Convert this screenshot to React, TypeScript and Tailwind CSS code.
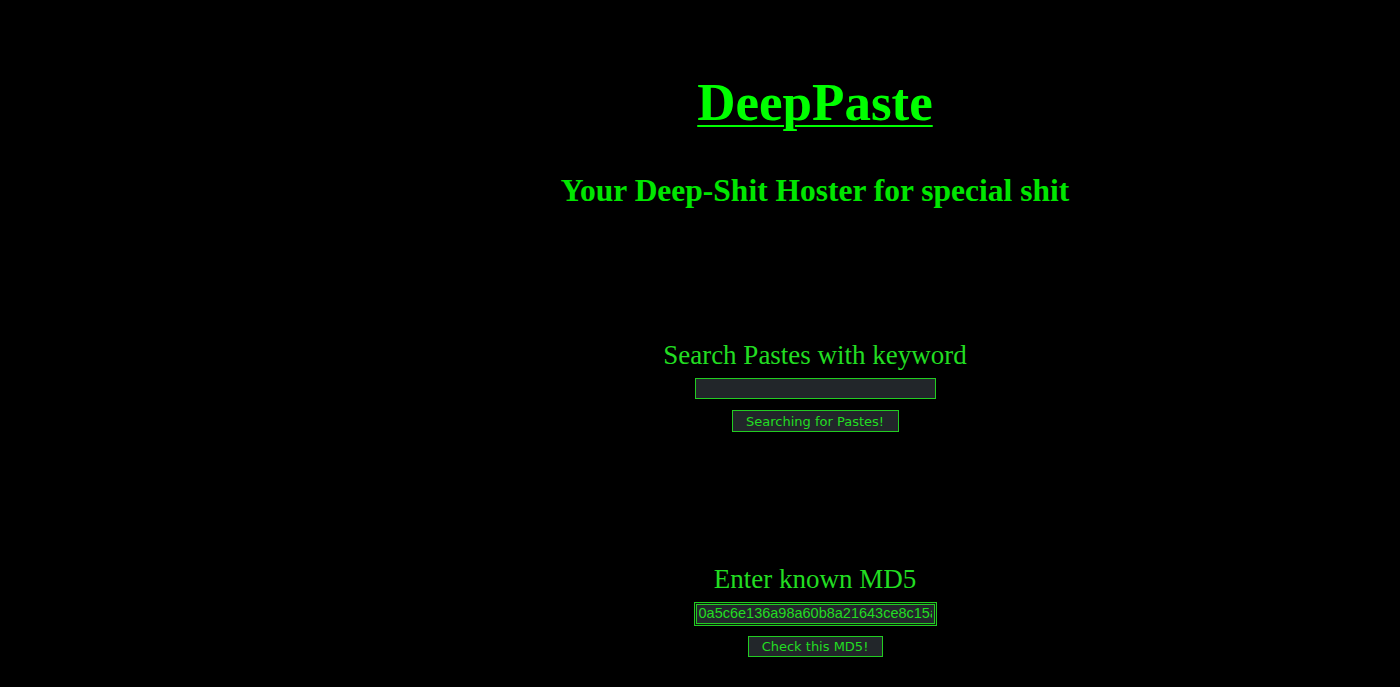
import React from 'react'

export default function App() {
  return (
    <div className="min-h-[687px] w-full bg-black flex text-[#19e619]">
      {/* empty left column */}
      <div className="w-[230px] shrink-0" />

      <main className="flex-1 flex flex-col items-center" style={{ fontFamily: '"Liberation Serif", serif' }}>
        <h1 className="mt-[72px] text-[53px] leading-[60px] font-bold text-[#00ff00] underline decoration-[2px] underline-offset-[5px]">
          DeepPaste
        </h1>
        <h2 className="mt-[41px] text-[31.5px] leading-[36px] font-bold text-[#00e600]">
          Your Deep-Shit Hoster for special shit
        </h2>

        {/* keyword search */}
        <section className="mt-[131px] flex flex-col items-center">
          <h3 className="text-[27px] leading-[30px] text-[#22dd22]">Search Pastes with keyword</h3>
          <div className="mt-[8px] w-[241px] h-[21px] bg-[#22262a] border border-[#22cc22]">
            <input
              type="text"
              className="block w-full h-full bg-transparent outline-none px-1 text-[13px] text-[#22dd22]"
              style={{ fontFamily: '"DejaVu Sans", sans-serif' }}
            />
          </div>
          <button
            className="mt-[11px] w-[167px] h-[22px] bg-[#22262a] border border-[#22cc22] text-[13px] leading-none text-[#22dd22]"
            style={{ fontFamily: '"DejaVu Sans", sans-serif' }}
          >
            Searching for Pastes!
          </button>
        </section>

        {/* md5 lookup */}
        <section className="mt-[132px] flex flex-col items-center">
          <h3 className="text-[27px] leading-[30px] text-[#22dd22]">Enter known MD5</h3>
          <div className="mt-[8px] border border-[#22cc22] p-px bg-[#101410]">
            <input
              type="text"
              defaultValue="0a5c6e136a98a60b8a21643ce8c15a"
              className="block w-[239px] h-[20px] bg-[#22262a] border border-[#22cc22] outline-none px-[2px] text-[14.5px] text-[#22dd22]"
              style={{ fontFamily: '"Liberation Sans", sans-serif' }}
            />
          </div>
          <button
            className="mt-[10px] w-[135px] h-[21px] bg-[#22262a] border border-[#22cc22] text-[13px] leading-none text-[#22dd22]"
            style={{ fontFamily: '"DejaVu Sans", sans-serif' }}
          >
            Check this MD5!
          </button>
        </section>
      </main>
    </div>
  )
}
